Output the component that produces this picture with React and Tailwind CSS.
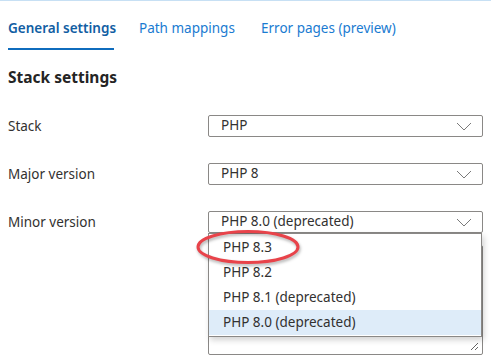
import React from 'react';

const font = { fontFamily: '"Segoe UI", "Noto Sans", "Open Sans", sans-serif' };

function Chevron() {
  return (
    <svg width="16" height="9" viewBox="0 0 16 9" className="shrink-0">
      <polyline points="1,1 8,8 15,1" fill="none" stroke="#7a7a7a" strokeWidth="1" />
    </svg>
  );
}

function Select({ value }) {
  return (
    <div className="flex h-[22px] w-[275px] items-center justify-between rounded-[2px] border border-[#8a8886] bg-white pl-[12px] pr-[10px] text-[13.5px] text-[#323130]">
      <span className="leading-none">{value}</span>
      <Chevron />
    </div>
  );
}

function Row({ label, value, children }) {
  return (
    <div className="relative flex h-[22px] items-center">
      <div className="w-[200px] text-[13.5px] text-[#323130]">{label}</div>
      <Select value={value} />
      {children}
    </div>
  );
}

const options = ['PHP 8.3', 'PHP 8.2', 'PHP 8.1 (deprecated)', 'PHP 8.0 (deprecated)'];

export default function App() {
  return (
    <div className="h-[358px] w-[491px] overflow-hidden border-t border-[#c7e0f4] bg-white" style={font}>
      <div className="flex whitespace-nowrap pl-[8px]">
        <div className="w-[106px] border-b-2 border-[#0f6cbd] pb-[10px] pt-[17px] text-[13.5px] font-semibold leading-[20px] text-[#115ea3]">
          General settings
        </div>
        <div className="ml-[25px] w-[122px] pb-[10px] pt-[17px] text-[13.5px] leading-[20px] text-[#1a7bd1]">Path mappings</div>
        <div className="pb-[10px] pt-[17px] text-[13.5px] leading-[20px] text-[#1a7bd1]">Error pages (preview)</div>
      </div>

      <div className="px-[8px]">
        <h2 className="mt-[16px] text-[15.5px] font-bold leading-[22px] text-[#242424]">Stack settings</h2>

        <div className="mt-[27px] flex flex-col gap-[26px]">
          <Row label="Stack" value="PHP" />
          <Row label="Major version" value="PHP 8" />
          <Row label="Minor version" value="PHP 8.0 (deprecated)">
            <div className="absolute left-[200px] top-[22px] z-10 w-[274px] border border-[#8a8886] bg-white py-[1px] shadow-[2px_3px_6px_rgba(0,0,0,0.18)]">
              {options.map((o, i) => (
                <div
                  key={o}
                  className={
                    i === 3
                      ? 'flex h-[25px] items-center bg-[#deecf9] pl-[14px] text-[13.5px] text-[#323130]'
                      : 'flex h-[25px] items-center pl-[14px] text-[13.5px] text-[#323130]'
                  }
                >
                  {o}
                </div>
              ))}
            </div>
            <svg className="absolute left-[187px] top-[17px] z-20" width="108" height="38" viewBox="0 0 108 38" style={{ filter: 'drop-shadow(1px 2px 1.5px rgba(0,0,0,0.3))' }}>
              <ellipse cx="53" cy="19" rx="50" ry="15.5" fill="none" stroke="#e8434a" strokeWidth="3" />
            </svg>
          </Row>
        </div>

        <div className="relative ml-[200px] mt-[12px] h-[110px] w-[275px] rounded-[2px] border border-[#8a8886]">
          <svg className="absolute bottom-[3px] right-[3px]" width="9" height="9" viewBox="0 0 9 9">
            <line x1="1" y1="8" x2="8" y2="1" stroke="#666" strokeWidth="1" />
            <line x1="5" y1="8" x2="8" y2="5" stroke="#666" strokeWidth="1" />
          </svg>
        </div>
      </div>
    </div>
  );
}
